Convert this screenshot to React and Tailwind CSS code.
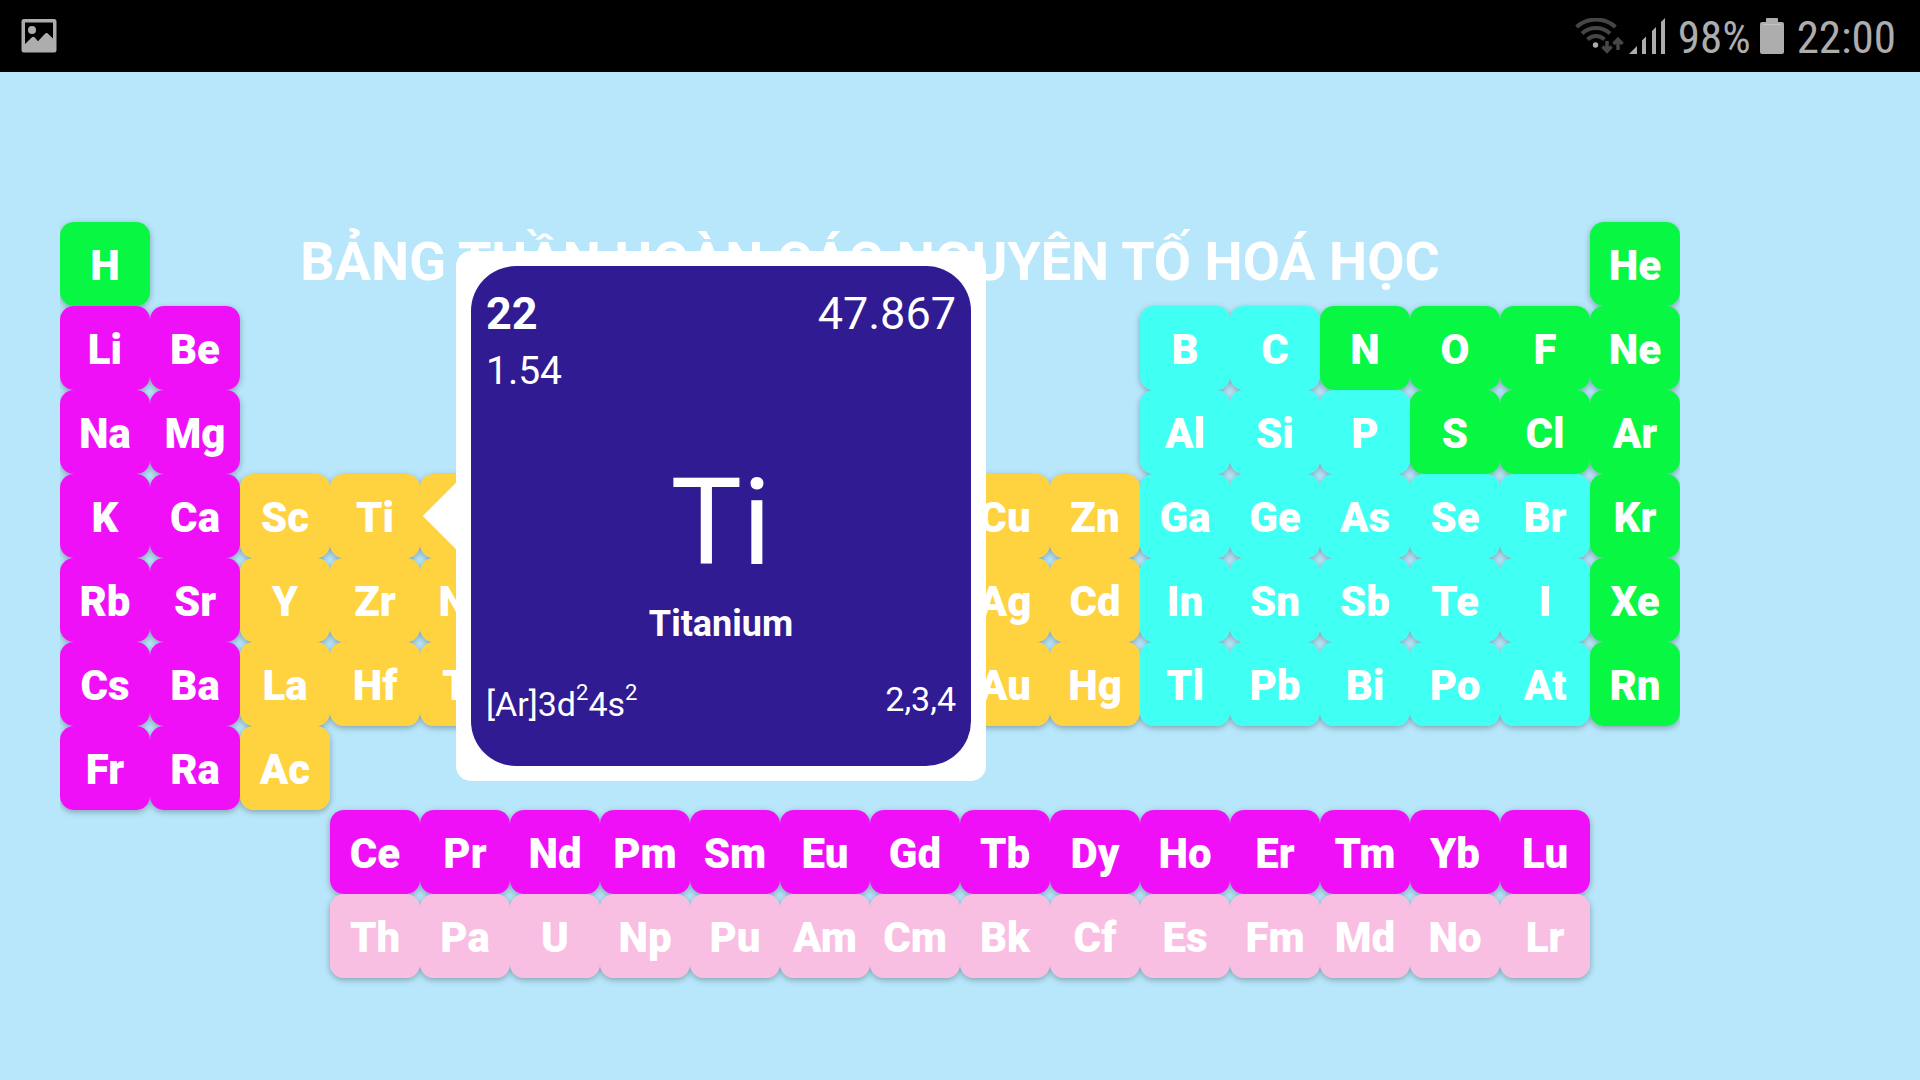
const G = "bg-[#08f742]";
const M = "bg-[#f010f8]";
const Y = "bg-[#ffd23f]";
const C = "bg-[#40fff3]";
const P = "bg-[#f9bfe2]";

// [row, first column, background, symbols]
const runs = [
  [1, 1, G, "H"],
  [1, 18, G, "He"],
  [2, 1, M, "Li Be"],
  [2, 13, C, "B C"],
  [2, 15, G, "N O F Ne"],
  [3, 1, M, "Na Mg"],
  [3, 13, C, "Al Si P"],
  [3, 16, G, "S Cl Ar"],
  [4, 1, M, "K Ca"],
  [4, 3, Y, "Sc Ti V Cr Mn Fe Co Ni Cu Zn"],
  [4, 13, C, "Ga Ge As Se Br"],
  [4, 18, G, "Kr"],
  [5, 1, M, "Rb Sr"],
  [5, 3, Y, "Y Zr Nb Mo Tc Ru Rh Pd Ag Cd"],
  [5, 13, C, "In Sn Sb Te I"],
  [5, 18, G, "Xe"],
  [6, 1, M, "Cs Ba"],
  [6, 3, Y, "La Hf Ta W Re Os Ir Pt Au Hg"],
  [6, 13, C, "Tl Pb Bi Po At"],
  [6, 18, G, "Rn"],
  [7, 1, M, "Fr Ra"],
  [7, 3, Y, "Ac"],
  [8, 4, M, "Ce Pr Nd Pm Sm Eu Gd Tb Dy Ho Er Tm Yb Lu"],
  [9, 4, P, "Th Pa U Np Pu Am Cm Bk Cf Es Fm Md No Lr"],
];

const cells = runs.flatMap(([row, start, color, symbols]) =>
  symbols.split(" ").map((symbol, i) => ({ symbol, row, col: start + i, color }))
);

function StatusBar() {
  return (
    <header className="flex h-[72px] items-center justify-between bg-black pr-6 pl-[21px] text-[#adadad]">
      <svg width="36" height="36" viewBox="0 0 36 36" aria-label="Picture">
        <path
          fill="currentColor"
          fillRule="evenodd"
          d="M3 1h30a2.500 2.500 0 0 1 2.500 2.500v28.500a2.500 2.500 0 0 1-2.500 2.500H3a2.500 2.500 0 0 1-2.500-2.500V3.500A2.500 2.500 0 0 1 3 1zM4 4.500V26l6.500-6.200c1.500-1.400 2.500-1.200 3.500 0l3 3.400 6.500-7c1.500-1.600 2.800-1.500 4 0L32 20.500v-16z"
        />
        <circle cx="11" cy="12" r="4" fill="currentColor" />
      </svg>
      <div className="flex items-center font-['Roboto_Condensed',Roboto,sans-serif] text-[45px] leading-none">
        <svg width="49" height="36" viewBox="0 0 49 36" fill="none" aria-label="Wi-Fi">
          <g stroke="#464646" strokeWidth="4">
            <path d="M1.500 9C12.500-1 29.500-1 40.500 9" />
            <path d="M7 15.500c8-7.300 20-7.300 28 0" />
            <path d="M12.500 21.500c5-4.600 12-4.600 17 0" />
          </g>
          <circle cx="20.500" cy="27" r="2.700" fill="#adadad" />
          <g stroke="#464646" strokeWidth="3.500">
            <path d="M32 23v11M27.500 28.500l4.500 4.700 4.500-4.700" />
            <path d="M43 32V21M38.500 26l4.500-4.700 4.500 4.700" />
          </g>
        </svg>
        <svg className="ml-1" width="38" height="36" viewBox="0 0 38 36" fill="currentColor" aria-label="Signal">
          <path d="M1 36L9 28v8zM14 36V22.500l4-4V36zM24 36V13l4-4v27zM33 36V4l4-4v36z" />
        </svg>
        <span className="ml-3 pt-0.5">98%</span>
        <svg className="ml-2 mr-3" width="26" height="36" viewBox="0 0 26 36" fill="currentColor" aria-label="Battery">
          <path d="M8 0h10q1 0 1 1v3h4q2 0 2 2v28q0 2-2 2H3q-2 0-2-2V6q0-2 2-2h4V1q0-1 1-1z" />
          <path d="M4 6.500h18" stroke="#c4c4c4" />
        </svg>
        <time className="pt-0.5">22:00</time>
      </div>
    </header>
  );
}

function ElementCard() {
  return (
    <div
      role="dialog"
      aria-label="Titanium"
      className="absolute top-1/2 left-full z-10 ml-9 -translate-y-1/2 rounded-[15px] bg-white p-[15px] font-normal text-white"
    >
      <div className="absolute top-1/2 left-0 size-[47px] -translate-x-1/2 -translate-y-1/2 rotate-45 bg-white" />
      <div className="relative flex size-[500px] flex-col rounded-[45px] bg-[#311b92] px-[15px] pt-[21px]">
        <div className="flex justify-between text-[45px] leading-[53px]">
          <b className="font-bold">22</b>
          <span>47.867</span>
        </div>
        <p className="mt-[5px] text-[39px] leading-[52px]">1.54</p>
        <p className="mt-14 text-center text-[120px] leading-[140px]">Ti</p>
        <h2 className="mt-[10px] text-center text-[36px] leading-[42px] font-bold">Titanium</h2>
        <div className="mt-[35px] flex items-start justify-between text-[34px] leading-[38px]">
          <span className="pt-[5px]">
            [Ar]3d<sup className="-top-4 align-baseline text-[22px] leading-none">2</sup>4s
            <sup className="-top-4 align-baseline text-[22px] leading-none">2</sup>
          </span>
          <span>2,3,4</span>
        </div>
      </div>
    </div>
  );
}

export default function App() {
  return (
    <div className="flex min-h-screen flex-col bg-[#b8e7fb] font-[Roboto,sans-serif]">
      <StatusBar />
      <main className="pt-[150px] pr-60 pb-24 pl-15">
        <div className="isolate grid auto-rows-[84px] grid-cols-[repeat(18,minmax(0,1fr))] overflow-x-clip text-white">
          <h1 className="col-start-3 col-end-17 row-start-1 self-center pb-1 text-center text-[54px] leading-[64px] font-bold whitespace-nowrap">
            BẢNG TUẦN HOÀN CÁC NGUYÊN TỐ HOÁ HỌC
          </h1>
          {cells.map(({ symbol, row, col, color }) => (
            <div key={symbol} className="relative" style={{ gridRow: row, gridColumn: col }}>
              <div className="absolute inset-0 -z-10 rounded-[14px] shadow-[0_2px_6px_rgba(0,0,0,0.3)]" />
              <button
                type="button"
                className={`flex size-full items-center justify-center rounded-[14px] pt-1 text-[42px] leading-none font-black ${color}`}
              >
                {symbol}
              </button>
              {symbol === "Ti" && <ElementCard />}
            </div>
          ))}
        </div>
      </main>
    </div>
  );
}
